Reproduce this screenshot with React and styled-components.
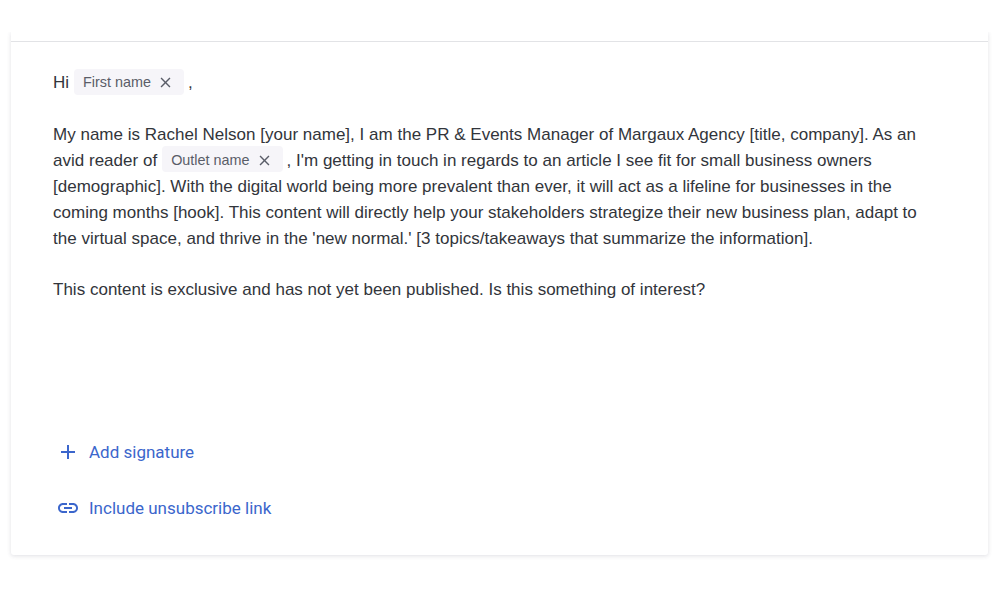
import React from 'react'
import styled, { createGlobalStyle } from 'styled-components'
import { MdAdd, MdLink, MdClose } from 'react-icons/md'

const GlobalStyle = createGlobalStyle`
  html, body {
    margin: 0;
    padding: 0;
    background: #fff;
    overflow: hidden;
  }
`

const Page = styled.div`
  width: 1000px;
  height: 600px;
  padding: 32px 12px 0 11px;
  box-sizing: border-box;
  overflow: hidden;
`

const Card = styled.div`
  height: 523px;
  box-sizing: border-box;
  padding: 0 0 0 42px;
  background: #fff;
  border-radius: 0 0 3px 3px;
  box-shadow: 0 1px 4px rgba(60, 64, 90, 0.16);
  clip-path: inset(0 -8px -8px -8px);
  display: flex;
  flex-direction: column;
`

const TopRule = styled.div`
  height: 1px;
  margin: 9px 0 0 -42px;
  background: #e2e3e6;
`

const Body = styled.div`
  width: 890px;
  margin-top: 28px;
  font-family: "Liberation Sans", Arial, sans-serif;
  font-size: 17px;
  line-height: 25.7px;
  letter-spacing: 0.012px;
  color: #32353b;
`

const Para = styled.p`
  margin: 0 0 25.7px;
  white-space: nowrap;
`

const Chip = styled.span`
  display: inline-flex;
  align-items: center;
  gap: 6px;
  height: 26px;
  box-sizing: border-box;
  margin: 0 ${p => p.$after}px 0 ${p => p.$before}px;
  padding: 2px 10px 0 9px;
  vertical-align: middle;
  background: #f6f5f9;
  border-radius: 4px;
  font-size: 14.4px;
  letter-spacing: 0;
  color: #5a5d68;
  position: relative;
  top: -2px;
`

const Actions = styled.div`
  margin-top: 111px;
  display: flex;
  flex-direction: column;
  gap: 32px;
`

const Action = styled.div`
  display: flex;
  align-items: center;
  gap: 9px;
  height: 24px;
  padding-left: 3px;
  font-family: Roboto, Arial, sans-serif;
  font-size: 17px;
  color: #3b66cc;
`

const App = () => (
  <Page>
    <GlobalStyle />
    <Card>
      <TopRule />
      <Body>
        <Para>
          Hi<Chip $before={5} $after={4}>First name <MdClose size={17} /></Chip>,
        </Para>
        <Para>
          My name is Rachel Nelson [your name], I am the PR &amp; Events Manager of Margaux Agency [title, company]. As an<br />
          avid reader of<Chip $before={5} $after={4}>Outlet name <MdClose size={17} /></Chip>, I'm getting in touch in regards to an article I see fit for small business owners<br />
          [demographic]. With the digital world being more prevalent than ever, it will act as a lifeline for businesses in the<br />
          coming months [hook]. This content will directly help your stakeholders strategize their new business plan, adapt to<br />
          the virtual space, and thrive in the 'new normal.' [3 topics/takeaways that summarize the information].
        </Para>
        <Para>This content is exclusive and has not yet been published. Is this something of interest?</Para>
      </Body>
      <Actions>
        <Action><MdAdd size={24} />Add signature</Action>
        <Action><MdLink size={24} />Include unsubscribe link</Action>
      </Actions>
    </Card>
  </Page>
)

export default App
